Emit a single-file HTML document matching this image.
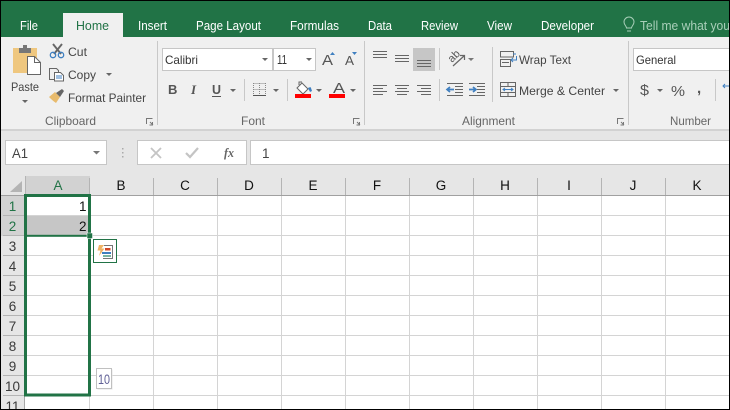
<!DOCTYPE html>
<html><head><meta charset="utf-8"><style>
html,body{margin:0;padding:0;background:#fff}
svg{display:block}
text{font-family:"Liberation Sans",sans-serif;font-size:12.5px;fill:#444}
.t{fill:#fff;font-size:12.5px}
.r{font-size:12px;fill:#444}
.g{font-size:12px;fill:#666}
.h{font-size:13.5px;fill:#111;text-anchor:middle}
.n{font-size:13.5px;fill:#3a3a3a;text-anchor:middle}
.ln{stroke:#666;stroke-width:1;fill:none}
.sep{stroke:#c8c8c8;stroke-width:1}
.gr{stroke:#d4d4d4;stroke-width:1}
.hs{stroke:#b4b4b4;stroke-width:1}
</style></head><body>
<svg xmlns="http://www.w3.org/2000/svg" width="730" height="410" viewBox="0 0 730 410" lang="en">
<rect width="730" height="410" fill="#fff"/>
<rect y="0" width="730" height="37" fill="#217346"/>
<rect y="37" width="730" height="92" fill="#f0f0f0"/>
<rect y="129" width="730" height="2" fill="#d2d2d2"/>
<rect y="131" width="730" height="45" fill="#e6e6e6"/>
<rect x="63" y="13" width="60" height="24" fill="#f0f0f0"/>
<text class="t" x="20" y="30" textLength="18" lengthAdjust="spacingAndGlyphs">File</text>
<text x="76" y="30" textLength="33" lengthAdjust="spacingAndGlyphs" style="fill:#217346">Home</text>
<text class="t" x="138" y="30" textLength="29" lengthAdjust="spacingAndGlyphs">Insert</text>
<text class="t" x="196" y="30" textLength="65" lengthAdjust="spacingAndGlyphs">Page Layout</text>
<text class="t" x="290" y="30" textLength="49" lengthAdjust="spacingAndGlyphs">Formulas</text>
<text class="t" x="368" y="30" textLength="24" lengthAdjust="spacingAndGlyphs">Data</text>
<text class="t" x="421" y="30" textLength="37" lengthAdjust="spacingAndGlyphs">Review</text>
<text class="t" x="487" y="30" textLength="25" lengthAdjust="spacingAndGlyphs">View</text>
<text class="t" x="541" y="30" textLength="53" lengthAdjust="spacingAndGlyphs">Developer</text>
<path d="M627 31h4M626.500 28c0-2-2.500-3-2.500-6a5 5 0 0 1 10 0c0 3-2.500 4-2.500 6z" fill="none" stroke="#a9cfb9" stroke-width="1"/>
<text x="640" y="30" textLength="90" lengthAdjust="spacingAndGlyphs" style="fill:#a9cfb9">Tell me what you</text>

<!-- Clipboard -->
<path d="M13 48h24v25h-24z" fill="#efc77f"/>
<rect x="19" y="48" width="12" height="5" fill="#777"/><rect x="23" y="45" width="4" height="3" fill="#777"/>
<path d="M27.500 56.500h7l6 6v12h-13z" fill="#fff" stroke="#666"/><path d="M34.500 56.500v6h6" fill="none" stroke="#666"/>
<text class="r" x="11" y="91" textLength="28" lengthAdjust="spacingAndGlyphs">Paste</text>
<path d="M22 100h6l-3 3z" fill="#666"/>
<path d="M53 44l8 10M62 44l-8 10" stroke="#666" stroke-width="1.900" fill="none"/>
<circle cx="53" cy="55" r="2.700" fill="none" stroke="#3f7fc0" stroke-width="1.300"/><circle cx="61" cy="55" r="2.700" fill="none" stroke="#3f7fc0" stroke-width="1.300"/>
<text class="r" x="68" y="56" textLength="19" lengthAdjust="spacingAndGlyphs">Cut</text>
<path d="M49.500 68.500h7l2 2v9h-9z" fill="#f0f0f0" stroke="#666"/><path d="M54.500 72.500h6l3 3v5.500h-9z" fill="#fff" stroke="#666"/><path d="M56 76h6M56 78h6" stroke="#3f7fc0"/>
<text class="r" x="68" y="79" textLength="28" lengthAdjust="spacingAndGlyphs">Copy</text>
<path d="M106 73h6l-3 3z" fill="#666"/>
<path d="M49 97l6-5 5 5-4 6c-3-2-5-4-7-6z" fill="#e8bb6d"/><path d="M56 93l6-4 2 2-4 6z" fill="#666"/>
<text class="r" x="68" y="102" textLength="78" lengthAdjust="spacingAndGlyphs">Format Painter</text>
<text class="g" x="45" y="125" textLength="51" lengthAdjust="spacingAndGlyphs">Clipboard</text>
<path d="M146.500 124v-5.500h6M150 122l3 3M152.500 122v3h-3" fill="none" stroke="#777"/>
<line class="sep" x1="157.500" y1="41" x2="157.500" y2="125"/>

<!-- Font -->
<rect x="162.500" y="48.500" width="110" height="22" fill="#fff" stroke="#c6c6c6"/>
<rect x="273.500" y="48.500" width="42" height="22" fill="#fff" stroke="#c6c6c6"/>
<text class="r" x="165" y="64" textLength="33" lengthAdjust="spacingAndGlyphs" style="fill:#333">Calibri</text>
<path d="M262 58h6l-3 3z" fill="#666"/>
<text x="277" y="64" textLength="10" lengthAdjust="spacingAndGlyphs" style="fill:#333;font-size:13px">11</text>
<path d="M306 58h6l-3 3z" fill="#666"/>
<text x="322" y="65" style="font-size:15px;fill:#555" textLength="11" lengthAdjust="spacingAndGlyphs">A</text>
<path d="M330 55h5l-2.500-3z" fill="#3f7fc0"/>
<text x="345" y="65" style="font-size:13px;fill:#555" textLength="9" lengthAdjust="spacingAndGlyphs">A</text>
<path d="M352 52h5l-2.500 3z" fill="#3f7fc0"/>
<text x="168" y="94" style="font-size:13px;font-weight:bold;fill:#555">B</text>
<text x="191" y="94" style="font-size:13px;font-style:italic;fill:#555;font-family:'Liberation Serif',serif;font-weight:bold">I</text>
<text x="212" y="94" style="font-size:13px;font-weight:bold;fill:#555" textLength="9" lengthAdjust="spacingAndGlyphs">U</text>
<rect x="212" y="96" width="9" height="1" fill="#555"/>
<path d="M230 89h6l-3 3z" fill="#666"/>
<line class="sep" x1="244.500" y1="79" x2="244.500" y2="101"/>
<path d="M253.500 83.500h12M253.500 89.500h12M259.500 83v12M253.500 83v12M265.500 83v12" stroke="#888" stroke-dasharray="1 1" fill="none"/>
<path d="M253 95.500h13" stroke="#555"/>
<path d="M273 89h6l-3 3z" fill="#666"/>
<line class="sep" x1="287.500" y1="79" x2="287.500" y2="101"/>
<path d="M302 83l6 6-5 5-6-6z" fill="#fff" stroke="#666"/><path d="M299 85v-3h3" fill="none" stroke="#666"/><path d="M308 88c2-1 3-1 3 0l1 3-2 1z" fill="#3f7fc0"/>
<rect x="295" y="94" width="16" height="4" fill="#f00"/>
<path d="M316 89h6l-3 3z" fill="#666"/>
<text x="333" y="93" style="font-size:14.500px;fill:#555" textLength="12" lengthAdjust="spacingAndGlyphs">A</text>
<rect x="329" y="94" width="16" height="4" fill="#f00"/>
<path d="M350 89h6l-3 3z" fill="#666"/>
<text class="g" x="241" y="125" textLength="24" lengthAdjust="spacingAndGlyphs">Font</text>
<path d="M353.500 124v-5.500h6M357 122l3 3M359.500 122v3h-3" fill="none" stroke="#777"/>
<line class="sep" x1="364.500" y1="41" x2="364.500" y2="125"/>

<!-- Alignment -->
<path class="ln" d="M373 51.500h14M373 54.500h14M373 57.500h14M395 55.500h14M395 58.500h14M395 61.500h14"/>
<rect x="413" y="48" width="22" height="23" fill="#c6c6c6"/>
<path class="ln" d="M417 60.500h14M417 63.500h14M417 66.500h14"/>
<line class="sep" x1="439.500" y1="48" x2="439.500" y2="70"/>
<text transform="translate(452 63) rotate(-45)" style="font-size:11px;fill:#555">ab</text>
<path d="M453 66l11-10M460 55.500h4.500v4.500" fill="none" stroke="#666" stroke-width="1.200"/>
<path d="M468 58h6l-3 3z" fill="#777"/>
<line class="sep" x1="492.500" y1="47" x2="492.500" y2="102"/>
<path class="ln" d="M500.500 51.500h13v5.500h-13zM500.500 59.500h10v7h-10zM502 62.500h7"/>
<path d="M513 54h3M516.500 56v4h-5M513 58l-2 2 2 2" fill="none" stroke="#3f7fc0"/>
<text class="r" x="519" y="64" textLength="52" lengthAdjust="spacingAndGlyphs">Wrap Text</text>
<path class="ln" d="M373 85.500h14M373 88.500h10M373 91.500h14M373 94.500h10M395 85.500h14M397 88.500h10M395 91.500h14M397 94.500h10M417 85.500h14M421 88.500h10M417 91.500h14M421 94.500h10"/>
<line class="sep" x1="439.500" y1="79" x2="439.500" y2="101"/>
<path class="ln" d="M447 83.500h16M455 86.500h8M455 89.500h8M455 92.500h8M447 95.500h16M469 83.500h16M477 86.500h8M477 89.500h8M477 92.500h8M469 95.500h16"/>
<path d="M447 89.500h7M450 87l-3 2.500 3 2.500" fill="none" stroke="#3f7fc0" stroke-width="1.700"/>
<path d="M469 89.500h7M473 87l3 2.500-3 2.500" fill="none" stroke="#3f7fc0" stroke-width="1.700"/>
<path class="ln" d="M500.500 82.500h15v14h-15zM500.500 86.500h15M500.500 92.500h15M508 82.500v4M508 92.500v4"/>
<path d="M503 89.500h10M505 88l-2 1.500 2 1.500M511 88l2 1.500-2 1.500" fill="none" stroke="#3f7fc0"/>
<text class="r" x="519" y="95" textLength="86" lengthAdjust="spacingAndGlyphs">Merge &amp; Center</text>
<path d="M613 89h6l-3 3z" fill="#666"/>
<text class="g" x="462" y="125" textLength="53" lengthAdjust="spacingAndGlyphs">Alignment</text>
<path d="M617.500 124v-5.500h6M621 122l3 3M623.500 122v3h-3" fill="none" stroke="#777"/>
<line class="sep" x1="628.500" y1="41" x2="628.500" y2="125"/>

<!-- Number -->
<rect x="633.500" y="48.500" width="100" height="22" fill="#fff" stroke="#c6c6c6"/>
<text class="r" x="636" y="64" textLength="40" lengthAdjust="spacingAndGlyphs" style="fill:#333">General</text>
<text x="640" y="95" style="font-size:15px;fill:#555" textLength="9" lengthAdjust="spacingAndGlyphs">$</text>
<path d="M657 89h6l-3 3z" fill="#666"/>
<text x="671" y="96" style="font-size:15px;fill:#555" textLength="14" lengthAdjust="spacingAndGlyphs">%</text>
<text x="697" y="93" style="font-size:15px;font-weight:bold;fill:#555">,</text>
<line class="sep" x1="715.500" y1="79" x2="715.500" y2="101"/>
<path d="M723 86h6M725 84l-2 2 2 2" fill="none" stroke="#3f7fc0"/>
<text class="g" x="670" y="125" textLength="41" lengthAdjust="spacingAndGlyphs">Number</text>

<!-- Formula bar -->
<rect x="5.500" y="140.500" width="101" height="24" fill="#fff" stroke="#c6c6c6"/>
<text x="12" y="158" style="font-size:13.500px;fill:#444" textLength="16" lengthAdjust="spacingAndGlyphs">A1</text>
<path d="M93 151h7l-3.500 3.500z" fill="#777"/>
<path d="M122 148h1.500v1.500H122zM122 152h1.500v1.500H122zM122 156h1.500v1.500H122z" fill="#aaa"/>
<rect x="137.500" y="140.500" width="109" height="24" fill="#fff" stroke="#c6c6c6"/>
<path d="M151 148l10 10M161 148l-10 10" stroke="#c4c4c4" stroke-width="1.800" fill="none"/>
<path d="M186 153l4 4 8-9" stroke="#c4c4c4" stroke-width="2.200" fill="none"/>
<text x="224" y="157" style="font-size:13px;font-style:italic;font-weight:bold;fill:#666;font-family:'Liberation Serif',serif" textLength="10" lengthAdjust="spacingAndGlyphs">fx</text>
<rect x="250.500" y="140.500" width="482" height="24" fill="#fff" stroke="#c6c6c6"/>
<text x="262" y="158" style="font-size:13.500px;fill:#444">1</text>

<!-- Headers -->
<rect y="176" width="730" height="20" fill="#e6e6e6"/>
<rect y="196" width="25" height="214" fill="#e6e6e6"/>
<rect x="25" y="176" width="65" height="20" fill="#d2d2d2"/>
<rect y="196" width="25" height="40" fill="#d2d2d2"/>
<path d="M10 192l12-11v11z" fill="#b4b4b4"/>
<path class="hs" d="M89.500 178v17M153.500 178v17M217.500 178v17M281.500 178v17M345.500 178v17M409.500 178v17M473.500 178v17M537.500 178v17M601.500 178v17M665.500 178v17"/>
<path class="hs" d="M25.500 176v20"/>
<rect y="195" width="730" height="1" fill="#a0a0a0"/>
<rect x="24" y="196" width="1" height="214" fill="#a8a8a8"/>
<path class="hs" d="M3 215.500h21M3 235.500h21M3 255.500h21M3 275.500h21M3 295.500h21M3 315.500h21M3 335.500h21M3 355.500h21M3 375.500h21M3 395.500h21"/>
<text class="h" x="58" y="190" style="fill:#217346">A</text>
<text class="h" x="121" y="190">B</text>
<text class="h" x="185" y="190">C</text>
<text class="h" x="249" y="190">D</text>
<text class="h" x="313" y="190">E</text>
<text class="h" x="377" y="190">F</text>
<text class="h" x="441" y="190">G</text>
<text class="h" x="505" y="190">H</text>
<text class="h" x="569" y="190">I</text>
<text class="h" x="633" y="190">J</text>
<text class="h" x="697" y="190">K</text>
<text class="n" x="12.500" y="211" style="fill:#217346">1</text>
<text class="n" x="12.500" y="231" style="fill:#217346">2</text>
<text class="n" x="12.500" y="251">3</text>
<text class="n" x="12.500" y="271">4</text>
<text class="n" x="12.500" y="291">5</text>
<text class="n" x="12.500" y="311">6</text>
<text class="n" x="12.500" y="331">7</text>
<text class="n" x="12.500" y="351">8</text>
<text class="n" x="12.500" y="371">9</text>
<text class="n" x="12.500" y="391">10</text>
<text class="n" x="12.500" y="411">11</text>

<!-- Grid -->
<path class="gr" d="M25 215.500h705M25 235.500h705M25 255.500h705M25 275.500h705M25 295.500h705M25 315.500h705M25 335.500h705M25 355.500h705M25 375.500h705M25 395.500h705"/>
<path class="gr" d="M89.500 196v214M153.500 196v214M217.500 196v214M281.500 196v214M345.500 196v214M409.500 196v214M473.500 196v214M537.500 196v214M601.500 196v214M665.500 196v214"/>

<!-- Cells -->
<rect x="26" y="216" width="63" height="19" fill="#c6c6c6"/>
<text x="79" y="211" style="font-size:13.500px;fill:#111">1</text>
<text x="79" y="231" style="font-size:13.500px;fill:#111">2</text>
<rect x="25.500" y="195.500" width="64" height="199.500" fill="none" stroke="#217346" stroke-width="3"/>
<rect x="25" y="234.800" width="65" height="2" fill="#217346"/>
<rect x="87" y="233" width="5.500" height="5.500" fill="#217346" stroke="#fff" stroke-width=".5"/>

<!-- Quick analysis -->
<rect x="93.500" y="239.500" width="23" height="23" fill="#fff" stroke="#217346"/>
<path d="M99 245h5l-2.500 3.500h3l-5.500 7.500 1.500-5.500h-3z" fill="#efb366"/>
<path d="M104 245.500h8.500v13h-9.500" fill="none" stroke="#777"/>
<rect x="105" y="248" width="5.500" height="2.500" fill="#d24726"/>
<rect x="102" y="252" width="9" height="2" fill="#3f7fc0"/>
<rect x="103" y="255" width="8" height="2" fill="#7bb5a0"/>

<!-- Fill tooltip -->
<rect x="97.500" y="369.500" width="15" height="20" fill="#e4e4e4"/>
<rect x="96.500" y="368.500" width="15" height="20" fill="#fff" stroke="#c0c0c0"/>
<text x="98" y="384" style="font-size:13.500px;fill:#5f5f95" textLength="12" lengthAdjust="spacingAndGlyphs">10</text>

<!-- Window frame -->
<rect y="0" width="730" height="1" fill="#000"/>
<rect y="409" width="730" height="1" fill="#000"/>
<rect x="0" width="1" height="410" fill="#000"/>
<rect x="729" width="1" height="410" fill="#000"/>
</svg>
</body></html>
